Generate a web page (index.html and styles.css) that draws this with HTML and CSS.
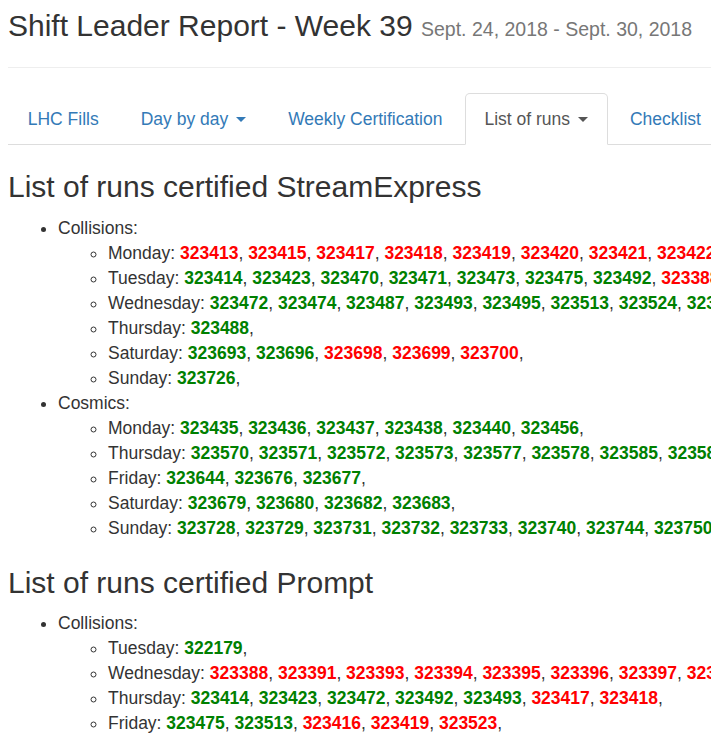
FILE: index.html
```html
<!DOCTYPE html>
<html>
<head>
<meta charset="utf-8">
<title>Shift Leader Report</title>
<link rel="stylesheet" href="styles.css">
</head>
<body>
<div class="page">
  <h1 class="title">Shift Leader Report - Week 39 <small class="dates">Sept. 24, 2018 - Sept. 30, 2018</small></h1>
  <hr class="rule">
  <ul class="tabs">
    <li class="tab"><a class="tab-link">LHC Fills</a></li>
    <li class="tab"><a class="tab-link">Day by day <span class="caret"></span></a></li>
    <li class="tab"><a class="tab-link">Weekly Certification</a></li>
    <li class="tab active"><a class="tab-link">List of runs <span class="caret"></span></a></li>
    <li class="tab"><a class="tab-link">Checklist</a></li>
  </ul>

  <h2 class="section">List of runs certified StreamExpress</h2>
  <ul class="types">
    <li>Collisions:
      <ul class="days">
        <li>Monday: <b class="bad">323413</b>, <b class="bad">323415</b>, <b class="bad">323417</b>, <b class="bad">323418</b>, <b class="bad">323419</b>, <b class="bad">323420</b>, <b class="bad">323421</b>, <b class="bad">323422</b>, <b class="bad">323424</b>,</li>
        <li>Tuesday: <b class="good">323414</b>, <b class="good">323423</b>, <b class="good">323470</b>, <b class="good">323471</b>, <b class="good">323473</b>, <b class="good">323475</b>, <b class="good">323492</b>, <b class="bad">323388</b>, <b class="bad">323391</b>,</li>
        <li>Wednesday: <b class="good">323472</b>, <b class="good">323474</b>, <b class="good">323487</b>, <b class="good">323493</b>, <b class="good">323495</b>, <b class="good">323513</b>, <b class="good">323524</b>, <b class="good">323525</b>,</li>
        <li>Thursday: <b class="good">323488</b>,</li>
        <li>Saturday: <b class="good">323693</b>, <b class="good">323696</b>, <b class="bad">323698</b>, <b class="bad">323699</b>, <b class="bad">323700</b>,</li>
        <li>Sunday: <b class="good">323726</b>,</li>
      </ul>
    </li>
    <li>Cosmics:
      <ul class="days">
        <li>Monday: <b class="good">323435</b>, <b class="good">323436</b>, <b class="good">323437</b>, <b class="good">323438</b>, <b class="good">323440</b>, <b class="good">323456</b>,</li>
        <li>Thursday: <b class="good">323570</b>, <b class="good">323571</b>, <b class="good">323572</b>, <b class="good">323573</b>, <b class="good">323577</b>, <b class="good">323578</b>, <b class="good">323585</b>, <b class="good">323586</b>,</li>
        <li>Friday: <b class="good">323644</b>, <b class="good">323676</b>, <b class="good">323677</b>,</li>
        <li>Saturday: <b class="good">323679</b>, <b class="good">323680</b>, <b class="good">323682</b>, <b class="good">323683</b>,</li>
        <li>Sunday: <b class="good">323728</b>, <b class="good">323729</b>, <b class="good">323731</b>, <b class="good">323732</b>, <b class="good">323733</b>, <b class="good">323740</b>, <b class="good">323744</b>, <b class="good">323750</b>,</li>
      </ul>
    </li>
  </ul>

  <h2 class="section">List of runs certified Prompt</h2>
  <ul class="types">
    <li>Collisions:
      <ul class="days">
        <li>Tuesday: <b class="good">322179</b>,</li>
        <li>Wednesday: <b class="bad">323388</b>, <b class="bad">323391</b>, <b class="bad">323393</b>, <b class="bad">323394</b>, <b class="bad">323395</b>, <b class="bad">323396</b>, <b class="bad">323397</b>, <b class="bad">323398</b>,</li>
        <li>Thursday: <b class="good">323414</b>, <b class="good">323423</b>, <b class="good">323472</b>, <b class="good">323492</b>, <b class="good">323493</b>, <b class="bad">323417</b>, <b class="bad">323418</b>,</li>
        <li>Friday: <b class="good">323475</b>, <b class="good">323513</b>, <b class="bad">323416</b>, <b class="bad">323419</b>, <b class="bad">323523</b>,</li>
      </ul>
    </li>
  </ul>
</div>
</body>
</html>
```

FILE: styles.css
```css
html, body {
  overflow: hidden;
}
body {
  margin: 8px 0 0 8px;
  font-family: "Liberation Sans", Arial, Helvetica, sans-serif;
  font-size: 17.5px;
  line-height: 25px;
  color: #333;
  background: #fff;
}
.page {
  width: 1200px;
}
.title {
  margin: 1px 0 0;
  font-size: 30px;
  line-height: 33px;
  font-weight: 500;
  color: #333;
}
.dates {
  font-size: 65%;
  font-weight: 400;
  color: #777;
  line-height: 1;
}
.rule {
  margin: 25px 0 25px;
  border: 0;
  border-top: 1px solid #eee;
  height: 0;
}
.tabs {
  display: flex;
  list-style: none;
  margin: 0;
  padding: 0;
  border-bottom: 1px solid #ddd;
}
.tab {
  margin-bottom: -1px;
}
.tab-link {
  display: block;
  margin-right: 2.5px;
  padding: 12.5px 18.75px;
  line-height: 25px;
  border: 1px solid transparent;
  border-radius: 5px 5px 0 0;
  color: #337ab7;
  text-decoration: none;
  white-space: nowrap;
}
.tab.active .tab-link {
  color: #555;
  background: #fff;
  border-color: #ddd;
  border-bottom-color: transparent;
}
.caret {
  display: inline-block;
  width: 0;
  height: 0;
  margin-left: 3px;
  vertical-align: middle;
  border-top: 5px solid;
  border-left: 5px solid transparent;
  border-right: 5px solid transparent;
}
.section {
  margin: 25px 0 12.5px;
  font-size: 30px;
  line-height: 33px;
  font-weight: 500;
}
.types {
  margin: 0 0 12.5px;
  padding-left: 50px;
  list-style: disc;
}
.days {
  margin: 0;
  padding-left: 50px;
  list-style: circle;
  white-space: nowrap;
}
.bad {
  color: #f00;
}
.good {
  color: #008000;
}
```
